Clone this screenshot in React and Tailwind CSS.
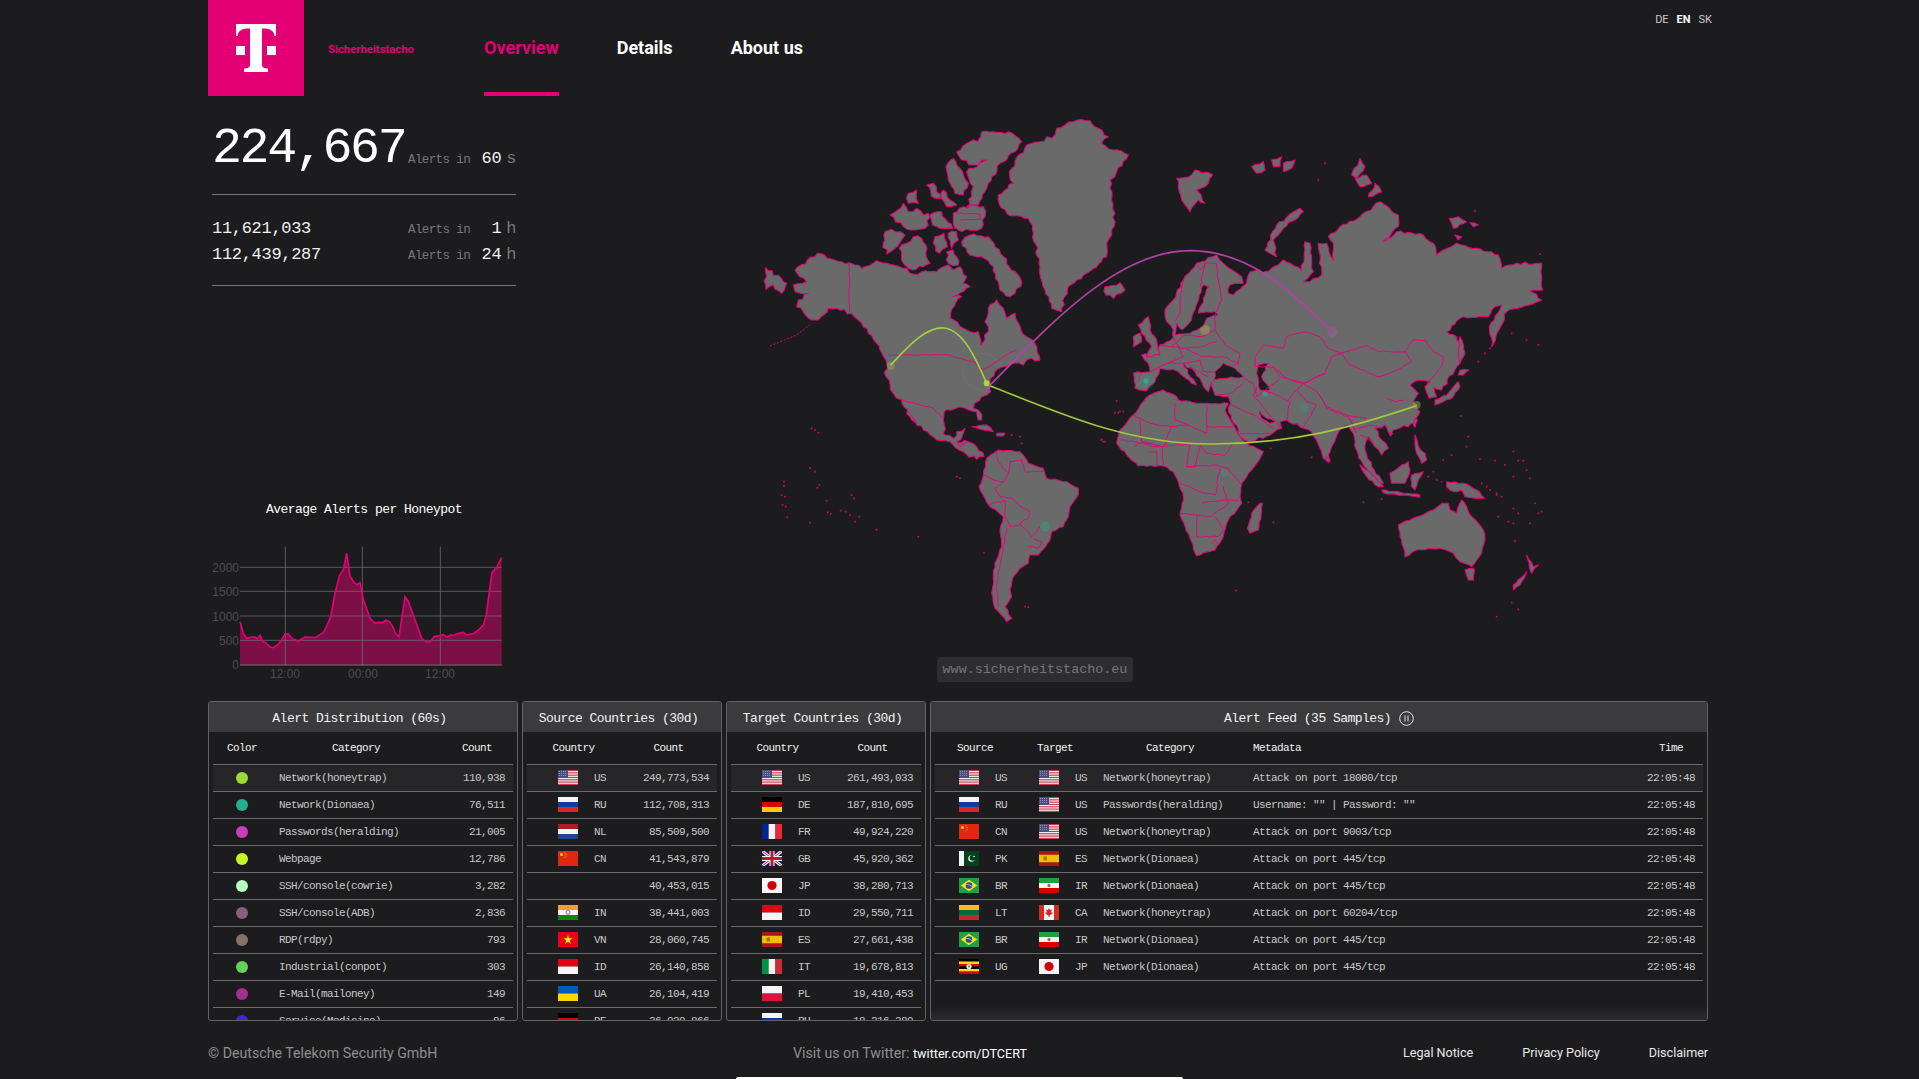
import React from "react";

const MONO = "font-['Liberation_Mono',monospace]";
const SANS = "font-['Roboto',sans-serif]";

/* ---------- map data, traced in 3x reference coordinates per crop ---------- */
const NA = [
  "165,510 232,460 262,475 328,488 345,495 365,505 410,482 440,490 500,505 510,520 545,515 590,515 625,495 640,510 660,500 680,530 670,550 690,560 640,590 665,590 632,640 632,655 680,690 715,695 722,735 735,720 745,680 735,665 745,625 770,600 790,625 800,655 825,640 835,670 860,710 885,730 900,780 860,780 850,795 820,790 790,800 765,815 750,850 752,875 725,890 700,925 715,930 725,960 715,960 710,935 675,925 620,928 610,960 610,1000 615,1005 640,1015 650,995 675,985 668,1005 650,1025 685,1025 710,1040 732,1070 710,1078 670,1055 630,1025 590,1020 550,990 515,960 485,900 460,880 438,830 440,790 420,750 385,700 355,660 335,640 290,625 265,625 235,660 215,660 170,620 175,600 205,580 165,575 160,555 200,545",
  "650,155 690,125 712,125 725,95 760,95 805,95 845,125 825,155 780,190 745,250 735,275 715,315 680,320 695,290 700,260 680,215 700,205 740,180 700,195 665,180",
  "618,200 640,175 660,205 685,250 670,285 645,280 625,240",
  "450,345 490,310 505,335 530,325 550,345 565,340 565,375 525,390 490,380",
  "560,255 580,250 605,295 585,295",
  "505,280 530,270 535,310 505,310",
  "610,270 630,300 650,315 620,320 605,295",
  "640,340 670,320 730,320 735,350 725,385 655,390 640,370",
  "570,345 605,335 638,385 600,385 578,375",
  "435,395 455,388 495,405 465,445 440,462 430,430",
  "478,445 520,410 545,415 570,490 550,500 505,505 490,490",
  "585,410 612,400 622,440 598,460 580,430",
  "625,400 650,395 655,420 635,445",
  "620,455 640,450 655,495 625,490",
  "665,425 690,405 745,410 790,470 845,545 825,580 810,590 780,570 760,500 725,470 690,465",
  "76,503 140,550 125,580 100,555 78,568",
  "1000,65 1050,62 1075,85 1105,110 1085,130 1120,150 1165,165 1130,215 1110,240 1115,300 1125,340 1115,390 1100,430 1100,470 1040,520 985,560 965,635 935,625 915,570 900,500 880,400 865,355 800,340 775,300 775,285 820,250 808,215 860,135 900,125 945,105 950,85",
  "1095,560 1140,548 1155,570 1120,595 1098,585",
];
const NA_LINES = [
  "328,488 328,635",
  "445,765 630,765 660,775 700,785 730,810 790,770 830,750",
  "485,900 540,915 580,925 610,955",
  "505,935 530,970 520,965",
  "650,1025 660,1040 685,1025",
  "650,340 720,342 722,358 660,360",
];
const EUR = [
  "75,630 100,600 130,540 170,490 230,465 250,490 305,530 310,550 270,555 265,580 280,585 320,550 330,515 360,510 365,520 415,495 430,480 485,510 495,425 510,430 515,470 520,515 490,545 510,545 545,525 535,430 560,430 580,480 580,430 565,410 600,380 660,350 700,320 720,305 775,345 775,380 730,425 770,395 850,405 880,430 890,465 950,430 1010,445 1075,465 1085,505 1130,490 1205,490 1208,570 1170,572 1205,600 1100,635 1055,740 1048,680 1085,615 1065,620 1045,650 970,650 920,695 950,710 965,740 960,790 950,800 905,870 882,862 890,890 868,895 855,860 870,845 835,840 810,855 825,870 835,880 820,905 830,915 840,935 825,970 760,990 750,1005 735,975 705,985 725,1020 745,1045 725,1065 705,1040 685,1010 675,1050 695,1100 730,1150 710,1155 670,1095 650,1050 640,1000 625,975 605,985 565,1065 570,1085 550,1075 515,995 490,985 440,960 420,965 425,985 390,1005 325,1025 300,1010 265,925 272,910 265,890 225,885 215,845 205,875 180,835 165,815 130,790 150,830 170,855 155,850 125,825 100,808 60,805 48,835 20,872 -15,865 -20,820 30,815 25,790 5,765 40,760 60,735 100,712 100,690 80,665",
  "-5,675 25,650 30,690 50,720 60,765 20,770 35,740 5,700",
  "-20,710 0,700 5,725 -20,740",
  "110,235 155,225 165,210 218,225 205,250 170,270 195,310 175,300 150,335 125,300 115,260",
  "335,200 370,185 375,210 350,220",
  "395,180 425,170 420,200 400,200",
  "430,190 465,180 455,205 430,215",
  "375,450 410,375 480,325 490,335 430,385 400,420 410,470",
  "635,225 660,175 675,200 650,235",
  "645,235 680,225 695,250 660,260",
  "685,290 705,250 725,275",
  "928,355 955,350 980,365 940,385",
  "990,368 1015,375 1000,380",
  "945,405 965,410 955,420",
  "960,710 975,760 960,790 955,760",
];
const SEAS = [
  "155,660 190,555 205,560 175,640 225,635 235,645 200,655 190,680 150,700 105,705 110,670 125,690",
  "225,815 250,790 275,800 310,830 250,835 222,840",
  "355,795 385,790 365,830 390,870 360,870 350,820",
  "358,932 380,955 405,965 390,970 365,955",
];
const EUR_LINES = [
  "230,490 235,540 245,600 225,650 225,690 255,735 300,760 295,790 275,800",
  "345,770 370,735 430,745 440,710 490,695 540,710 565,745 605,760 680,735 715,755 795,755 820,720 855,720 880,755 910,770 905,800 880,830 860,850",
  "605,760 630,795 715,830 760,815 815,785 795,755",
  "345,770 345,800 400,800 440,835 490,850 555,820 575,770 605,760",
  "555,820 490,850 535,880 560,920 620,945 680,955",
  "310,835 340,850 350,890 420,835",
  "350,860 340,885 385,940 425,985",
  "440,960 450,905 400,880 370,870",
  "400,800 420,830 490,850 460,880 440,905",
  "470,870 500,905 530,915 490,985",
  "535,880 560,925 625,950 640,980",
  "625,950 650,1000",
  "640,990 690,975 730,985",
  "660,1005 690,1020 705,1040",
  "270,915 350,950 400,985",
  "300,1000 390,1000",
  "225,885 272,880 310,850",
  "60,735 95,740 135,705",
  "100,712 130,770 80,790 30,815",
  "135,705 185,710 225,690",
  "135,745 185,740 230,725",
  "95,740 135,745 185,770 250,770 295,790",
  "85,790 130,790 180,780",
  "150,800 205,830",
  "180,780 190,815 225,815",
  "130,540 120,600 120,640 105,665",
  "170,490 180,510 195,490 230,490",
  "195,490 180,560",
  "740,895 765,905 790,900",
  "-5,845 5,820",
];
const AF = [
  "150,165 190,150 230,170 235,180 290,190 320,190 385,190 375,210 420,290 440,310 490,335 470,370 425,430 420,470 425,490 385,540 370,590 345,630 290,648 270,595 240,525 250,470 235,425 220,395 190,378 115,378 80,345 50,310 60,270 100,225 130,185",
  "480,490 488,490 475,570 450,580 442,565 455,520",
  "680,350 690,360 685,368 678,360",
  "780,375 810,395 850,440 835,440 800,410",
  "845,450 960,465 958,472 850,458",
  "870,400 905,375 925,365 930,390 915,430 875,430",
  "935,405 970,395 955,420 945,450 935,440",
  "1040,425 1090,430 1130,450 1155,475 1095,470 1085,450 1060,455 1040,440",
  "945,285 955,320 975,340 980,360 965,370 950,340 945,310",
  "1005,180 1040,165 1075,125 1080,140 1060,170 1030,185 1005,195",
  "1080,90 1105,90 1090,105 1075,105",
  "945,235 952,240 945,262 940,255",
  "868,278 878,280 872,288",
  "1000,510 1025,490 1045,490 1050,510 1070,520 1085,480 1100,500 1115,530 1150,570 1155,600 1145,640 1115,680 1080,665 1060,640 1020,625 950,630 915,650 905,600 895,555 940,535",
  "1095,690 1122,685 1120,720 1105,720",
  "1280,645 1300,680 1315,675 1295,700",
  "1280,695 1260,735 1240,750 1240,735",
];
const AF_LINES = [
  "120,240 125,305 190,320 215,260 265,255 320,280 320,190",
  "225,190 225,240 265,255",
  "320,260 400,262",
  "300,315 320,340 375,345 400,310",
  "185,320 190,375",
  "105,320 125,305 185,320 270,310 260,380 285,380 300,320",
  "60,300 130,310 160,320 185,320",
  "145,335 170,335 170,375",
  "100,225 150,250 215,260",
  "260,380 350,375 385,385 420,430",
  "240,430 300,455 345,465 355,430",
  "350,430 360,385",
  "240,520 290,525 330,530 385,490 370,440",
  "290,525 290,590 355,590 370,570 345,530",
  "305,490 385,480 415,480",
  "335,610 345,600 352,610 342,618",
];
const SA = [
  "620,175 655,150 720,155 745,190 790,205 800,235 860,245 895,265 895,285 870,320 865,350 850,380 815,395 810,420 775,465 750,465 745,490 720,505 700,530 690,570 695,590 675,620 695,655 680,665 645,625 635,580 645,490 665,440 660,390 670,350 625,315 597,260 610,225",
  "575,80 620,75 640,95 610,90",
  "650,100 675,100 670,108 650,108",
];
const SA_LINES = [
  "650,155 655,185 685,220 670,245 640,240 610,225",
  "685,220 690,185 725,180 735,215 790,215",
  "645,265 670,245",
  "645,265 660,290 695,295 730,325 750,335 745,355 720,370 755,410 770,395 780,380",
  "625,315 675,300 675,350 690,380 720,375",
  "680,385 665,470 650,560 655,620",
  "745,440 775,445 785,425 760,415",
];
const DOTS8 = "95,85 105,90 115,98 90,204 105,215 12,245 12,258 118,255 112,263 5,285 15,290 215,285 222,295 140,302 8,315 17,320 143,337 152,342 182,332 197,335 210,345 238,350 22,352 90,368 225,365 290,389 415,410 612,458 530,230 540,235 735,620 745,622 965,118 975,125 1015,38 1030,35 695,105 720,110 725,130";
const DOTS9 = "1082,228 1105,290 1100,320 1030,360 1055,345 1140,358 1185,362 1215,375 1240,335 1255,362 1270,362 1280,390 1290,415 1240,410 1190,460 1205,470 1240,505 1255,520 1225,545 1240,550 1315,520 1325,515 1305,490 1195,530 1290,550 1245,603 1235,788 1255,808 1190,830 790,487 845,477 520,547 408,752 50,183 60,215 45,218 5,300 10,305 445,487 512,325 635,352 1000,395 1010,420 985,410 1025,425 1145,430 1170,450 1190,465 1160,440";
const DOTS7 = "1115,700 1160,720 1195,735 1050,745 1035,760 1015,785 985,810 555,190 535,240 1200,462 1005,333 85,460";

const pts = (s) => s.split(" ").map((p) => p.split(",").map(Number));

/* subdivide a traced outline and shake it a little, so that coasts read as coasts */
function rough(s, amp, closed, seed0) {
  const p = pts(s);
  let seed = seed0;
  const rnd = () => {
    seed = (seed * 16807) % 2147483647;
    return (seed % 1000) / 1000 - 0.5;
  };
  const out = [];
  const n = closed ? p.length : p.length - 1;
  for (let i = 0; i < n; i++) {
    const [x0, y0] = p[i];
    const [x1, y1] = p[(i + 1) % p.length];
    out.push(`${x0},${y0}`);
    const len = Math.hypot(x1 - x0, y1 - y0);
    const k = Math.floor(len / 11);
    for (let j = 1; j < k; j++) {
      const t = j / k;
      const a = rnd() * amp * 2;
      out.push(`${(x0 + (x1 - x0) * t - ((y1 - y0) / len) * a).toFixed(1)},${(y0 + (y1 - y0) * t + ((x1 - x0) / len) * a).toFixed(1)}`);
    }
  }
  if (!closed) out.push(`${p[n][0]},${p[n][1]}`);
  return out.join(" ");
}

function Land({ at, shapes, lines, seas, dots, amp = 4 }) {
  return (
    <g transform={`translate(${at[0]} ${at[1]})`}>
      {shapes &&
        shapes.map((s, i) => (
          <polygon key={i} points={rough(s, amp, true, 97 + i * 13)} fill="#6a6a6a" stroke="#e8007a" strokeWidth="3.2" strokeLinejoin="round" />
        ))}
      {seas &&
        seas.map((s, i) => (
          <polygon key={i} points={rough(s, amp * 0.7, true, 31 + i * 7)} fill="#1c1c1e" stroke="#e8007a" strokeWidth="3" strokeLinejoin="round" />
        ))}
      {lines &&
        lines.map((s, i) => (
          <polyline key={i} points={rough(s, 2, false, 53 + i * 11)} fill="none" stroke="#e8007a" strokeWidth="2.8" strokeLinejoin="round" />
        ))}
      {dots &&
        pts(dots).map(([x, y], i) => <rect key={i} x={x - 2.5} y={y - 2.5} width="5" height="5" fill="#d6006c" />)}
    </g>
  );
}

function WorldMap() {
  return (
    <svg width="1189" height="605" viewBox="522 96 1189 605" className="block">
      <g transform="scale(0.33333)">
        <Land at={[2220, 300]} shapes={NA} lines={NA_LINES} amp={6} />
        <polyline points="2310,1038 2390,1005 2435,970" fill="none" stroke="#d6006c" strokeWidth="3" strokeDasharray="6 5" />
        <Land at={[2340, 1200]} shapes={SA} lines={SA_LINES} dots={DOTS8} amp={2.5} />
        <Land at={[3420, 300]} shapes={EUR} seas={SEAS} lines={EUR_LINES} dots={DOTS7} amp={4} />
        <Land at={[3300, 1020]} shapes={AF} lines={AF_LINES} dots={DOTS9} amp={2.5} />

        {/* pulses */}
        <circle cx="2945" cy="1115" r="55" fill="none" stroke="#8c9a70" strokeOpacity=".25" strokeWidth="2" />
        <circle cx="2672" cy="1098" r="12" fill="#8f9f62" fillOpacity=".6" />
        <circle cx="3615" cy="990" r="15" fill="#a8a050" fillOpacity=".5" />
        <circle cx="3997" cy="997" r="15" fill="#a05fa0" fillOpacity=".45" />
        <circle cx="4250" cy="1215" r="12" fill="#8f9f42" fillOpacity=".55" />
        <circle cx="3438" cy="1143" r="26" fill="#22b08e" fillOpacity=".16" stroke="#22b08e" strokeOpacity=".3" />
        <circle cx="3438" cy="1143" r="8" fill="#22b08e" fillOpacity=".85" />
        <circle cx="3795" cy="1182" r="40" fill="none" stroke="#22b08e" strokeOpacity=".22" />
        <circle cx="3795" cy="1182" r="8" fill="#22b08e" fillOpacity=".6" />
        <circle cx="3912" cy="1223" r="14" fill="#22b08e" fillOpacity=".25" />
        <circle cx="3672" cy="1420" r="11" fill="#22b08e" fillOpacity=".25" />
        <circle cx="3135" cy="1580" r="15" fill="#22b08e" fillOpacity=".4" />

        {/* arcs */}
        <path d="M2965,1160 C3150,975 3350,752 3570,752 C3740,752 3860,860 3997,995" fill="none" stroke="#b540a8" strokeWidth="5" />
        <path d="M2672,1095 C2720,1045 2775,980 2832,984 C2890,990 2930,1080 2960,1150" fill="none" stroke="#a2d03a" strokeWidth="5" />
        <path d="M2970,1157 C3200,1250 3400,1335 3640,1332 C3880,1330 4050,1285 4250,1217" fill="none" stroke="#a2c83a" strokeWidth="5" />
        <circle cx="2965" cy="1162" r="6" fill="#c040b0" />
        <circle cx="2960" cy="1150" r="9" fill="#a6e02e" />
      </g>
    </svg>
  );
}

/* ---------- flags ---------- */
const bands = (cols, vertical) => (
  <>
    {cols.map((c, i) =>
      vertical ? (
        <rect key={i} x={(20 / cols.length) * i} y="0" width={20 / cols.length + 0.1} height="15" fill={c} />
      ) : (
        <rect key={i} x="0" y={(15 / cols.length) * i} width="20" height={15 / cols.length + 0.1} fill={c} />
      )
    )}
  </>
);

function FlagArt({ c }) {
  switch (c) {
    case "US":
      return (
        <>
          <rect width="20" height="15" fill="#f4f4f4" />
          {[0, 2.3, 4.6, 6.9, 9.2, 11.5, 13.8].map((y) => (
            <rect key={y} y={y} width="20" height="1.15" fill="#c8384e" />
          ))}
          <rect width="10" height="8" fill="#4a4f82" />
          <path d="M1 1.5h8M1 3.5h8M1 5.5h8" stroke="#a9abc8" strokeWidth=".7" strokeDasharray="1 1" />
        </>
      );
    case "RU":
      return bands(["#f5f5f5", "#0a3aa8", "#d52b1e"]);
    case "NL":
      return bands(["#ae1c28", "#f5f5f5", "#21468b"]);
    case "DE":
      return bands(["#000000", "#dd0000", "#ffce00"]);
    case "FR":
      return bands(["#002395", "#f5f5f5", "#ed2939"], true);
    case "IT":
      return bands(["#009246", "#f5f5f5", "#ce2b37"], true);
    case "ID":
      return bands(["#e70011", "#f5f5f5"]);
    case "PL":
      return bands(["#f5f5f5", "#dc143c"]);
    case "UA":
      return bands(["#005bbb", "#ffd500"]);
    case "LT":
      return bands(["#fdb913", "#006a44", "#c1272d"]);
    case "CN":
      return (
        <>
          <rect width="20" height="15" fill="#de2910" />
          <circle cx="3.5" cy="3.5" r="1.5" fill="#ffde00" />
          <circle cx="7" cy="1.7" r=".5" fill="#ffde00" />
          <circle cx="8.2" cy="3.3" r=".5" fill="#ffde00" />
          <circle cx="8" cy="5" r=".5" fill="#ffde00" />
          <circle cx="6.8" cy="6.3" r=".5" fill="#ffde00" />
        </>
      );
    case "IN":
      return (
        <>
          {bands(["#ff9933", "#f5f5f5", "#138808"])}
          <circle cx="10" cy="7.5" r="2" fill="none" stroke="#3a3a9a" strokeWidth=".6" />
        </>
      );
    case "VN":
      return (
        <>
          <rect width="20" height="15" fill="#ec0015" />
          <polygon points="10,3 11.1,6.3 14.5,6.3 11.7,8.4 12.8,11.8 10,9.7 7.2,11.8 8.3,8.4 5.5,6.3 8.9,6.3" fill="#ffff00" />
        </>
      );
    case "GB":
      return (
        <>
          <rect width="20" height="15" fill="#012169" />
          <path d="M0 0L20 15M20 0L0 15" stroke="#fff" strokeWidth="3" />
          <path d="M0 0L20 15M20 0L0 15" stroke="#c8102e" strokeWidth="1" />
          <path d="M10 0V15M0 7.5H20" stroke="#fff" strokeWidth="5" />
          <path d="M10 0V15M0 7.5H20" stroke="#c8102e" strokeWidth="3" />
        </>
      );
    case "JP":
      return (
        <>
          <rect width="20" height="15" fill="#f7f7f7" />
          <circle cx="10" cy="7.5" r="4.6" fill="#d30000" />
        </>
      );
    case "ES":
      return (
        <>
          <rect width="20" height="15" fill="#aa151b" />
          <rect y="3.75" width="20" height="7.5" fill="#f1bf00" />
          <rect x="4.5" y="5.5" width="3.4" height="3.8" fill="#ad6b2c" />
        </>
      );
    case "PK":
      return (
        <>
          <rect width="20" height="15" fill="#01411c" />
          <rect width="5" height="15" fill="#f5f5f5" />
          <circle cx="12.5" cy="7.5" r="3.2" fill="#f5f5f5" />
          <circle cx="13.5" cy="6.8" r="2.9" fill="#01411c" />
          <circle cx="15" cy="5.5" r=".8" fill="#f5f5f5" />
        </>
      );
    case "BR":
      return (
        <>
          <rect width="20" height="15" fill="#229e45" />
          <polygon points="10,1.8 18.2,7.5 10,13.2 1.8,7.5" fill="#f8e509" />
          <circle cx="10" cy="7.5" r="3.3" fill="#2b49a3" />
          <path d="M6.9 6.6C9 6.3 11.5 7 13 8.6" stroke="#fff" strokeWidth=".6" fill="none" />
        </>
      );
    case "IR":
      return (
        <>
          {bands(["#239f40", "#f5f5f5", "#da0000"])}
          <circle cx="10" cy="7.5" r="1.5" fill="#da4040" />
        </>
      );
    case "CA":
      return (
        <>
          <rect width="20" height="15" fill="#f5f5f5" />
          <rect width="5" height="15" fill="#d52b1e" />
          <rect x="15" width="5" height="15" fill="#d52b1e" />
          <polygon points="10,3 11,5 12.8,4.5 12.2,7.5 13.8,7.5 13.2,9 10.5,10.5 10.5,12 9.5,12 9.5,10.5 6.8,9 6.2,7.5 7.8,7.5 7.2,4.5 9,5" fill="#d52b1e" />
        </>
      );
    case "UG":
      return (
        <>
          {bands(["#000", "#fcdc04", "#d90000", "#000", "#fcdc04", "#d90000"])}
          <circle cx="10" cy="7.5" r="2.6" fill="#f5f5f5" />
          <circle cx="10" cy="7.5" r="1" fill="#666" />
        </>
      );
    default:
      return null;
  }
}

function Flag({ c }) {
  return (
    <svg viewBox="0 0 20 15" className="block w-5 h-[15px] shrink-0 -mt-[3px]">
      <FlagArt c={c} />
    </svg>
  );
}

function CountryCell({ c, pad = 31 }) {
  if (!c) return <td className={tdBase} />;
  return (
    <td className={tdBase}>
      <div className="flex items-center" style={{ paddingLeft: pad }}>
        <Flag c={c} />
        <span className="ml-[16px]">{c}</span>
      </div>
    </td>
  );
}

/* ---------- tables ---------- */
const tdBase = "h-[27px] p-0 pt-[1px] border-b border-[#6a6a6a] text-[11px] tracking-[-0.6px] text-[#c8c8c8] whitespace-nowrap";
const thBase = "h-[33px] p-0 pt-[1px] border-b border-[#6a6a6a] text-[11px] tracking-[-0.6px] text-[#f2f2f2] font-normal text-center";

function Panel({ title, width, icon, fade, children }) {
  return (
    <section className={`relative h-[320px] shrink-0 overflow-hidden rounded-[3px] border border-[#636365] bg-[#1c1c1e] ${width}`}>
      <div className={`h-[30px] pt-[3px] bg-[#3b3b3d] flex items-center justify-center gap-[8px] text-[13px] tracking-[-0.54px] text-[#f2f2f2] ${icon ? "" : "pr-[7px]"}`}>
        <span>{title}</span>
        {icon}
      </div>
      <div className="px-1">{children}</div>
      {fade && <div className="absolute inset-x-0 bottom-0 h-[14px] bg-gradient-to-b from-transparent to-[#2c2c2e]" />}
    </section>
  );
}

const DIST = [
  ["#9cdb35", "Network(honeytrap)", "110,938"],
  ["#22b08e", "Network(Dionaea)", "76,511"],
  ["#cc3bb8", "Passwords(heralding)", "21,005"],
  ["#c6f52a", "Webpage", "12,786"],
  ["#b6fbc0", "SSH/console(cowrie)", "3,282"],
  ["#86607c", "SSH/console(ADB)", "2,836"],
  ["#857465", "RDP(rdpy)", "793"],
  ["#63d158", "Industrial(conpot)", "303"],
  ["#a52e93", "E-Mail(mailoney)", "149"],
  ["#4a25e0", "Service(Medicine)", "86"],
];
const SRC = [
  ["US", "249,773,534"],
  ["RU", "112,708,313"],
  ["NL", "85,509,500"],
  ["CN", "41,543,879"],
  ["", "40,453,015"],
  ["IN", "38,441,003"],
  ["VN", "28,060,745"],
  ["ID", "26,140,858"],
  ["UA", "26,104,419"],
  ["DE", "26,020,866"],
];
const TGT = [
  ["US", "261,493,033"],
  ["DE", "187,810,695"],
  ["FR", "49,924,220"],
  ["GB", "45,920,362"],
  ["JP", "38,280,713"],
  ["ID", "29,550,711"],
  ["ES", "27,661,438"],
  ["IT", "19,678,813"],
  ["PL", "19,410,453"],
  ["RU", "18,216,380"],
];
const FEED = [
  ["US", "US", "Network(honeytrap)", "Attack on port 18080/tcp"],
  ["RU", "US", "Passwords(heralding)", 'Username: "" | Password: ""'],
  ["CN", "US", "Network(honeytrap)", "Attack on port 9003/tcp"],
  ["PK", "ES", "Network(Dionaea)", "Attack on port 445/tcp"],
  ["BR", "IR", "Network(Dionaea)", "Attack on port 445/tcp"],
  ["LT", "CA", "Network(honeytrap)", "Attack on port 60204/tcp"],
  ["BR", "IR", "Network(Dionaea)", "Attack on port 445/tcp"],
  ["UG", "JP", "Network(Dionaea)", "Attack on port 445/tcp"],
];

function CountryTable({ title, rows }) {
  return (
    <Panel title={title} width="w-[200px]">
      <table className="w-full table-fixed border-separate border-spacing-0">
        <colgroup>
          <col className="w-[93px]" />
          <col />
        </colgroup>
        <thead>
          <tr>
            <th className={thBase}>Country</th>
            <th className={thBase}>Count</th>
          </tr>
        </thead>
        <tbody>
          {rows.map(([c, n], i) => (
            <tr key={n} className={i === 0 ? "bg-[#262628]" : ""}>
              <CountryCell c={c} />
              <td className={`${tdBase} text-right pr-2`}>{n}</td>
            </tr>
          ))}
        </tbody>
      </table>
    </Panel>
  );
}

function Stat({ value, amount, unit, big }) {
  return (
    <div className={`flex items-baseline ${big ? "" : "h-[26px] leading-[26px]"}`}>
      <span
        className={
          big
            ? "relative -top-[1px] w-[196px] text-[50px] leading-[50px] tracking-[-2.4px] text-white"
            : "w-[196px] text-[17px] tracking-[-0.3px] text-[#f0f0f0]"
        }
      >
        {value}
      </span>
      <span className="w-[64px] shrink-0 whitespace-nowrap text-[12.5px] tracking-[-0.6px] text-[#777779]">Alerts in</span>
      <span className="flex-1 whitespace-nowrap text-right text-[17px] tracking-[-0.4px] text-[#f0f0f0]">
        {amount}
        <span className="ml-[5px] text-[#777779]">{unit}</span>
      </span>
    </div>
  );
}

const CHART =
  "120,395 130,430 140,445 155,441 165,441 172,446 180,436 188,455 197,458 210,471 220,473 232,465 245,450 256,431 266,433 277,446 295,453 315,441 345,443 370,428 382,405 392,380 405,310 418,258 430,240 440,190 450,258 462,278 472,284 480,278 490,330 498,350 510,385 525,400 535,397 548,398 557,390 568,394 578,410 588,432 597,441 615,320 625,335 640,375 665,445 678,456 690,456 702,440 730,434 740,441 752,435 762,436 770,431 790,427 800,435 820,431 835,420 850,405 858,380 876,247 890,232 905,203";

function Chart() {
  const lab = { fontFamily: "'Liberation Sans',sans-serif", fontSize: 12, fill: "#4c4c4e" };
  return (
    <svg width="308" height="145" viewBox="208 540 308 145" className="block">
      <g transform="translate(200 490) scale(0.33333)">
        <polygon points={`120,526 ${CHART} 905,526`} fill="#7d0f47" />
        {[232, 304, 378, 451].map((y) => (
          <line key={y} x1="120" x2="905" y1={y} y2={y} stroke="#6f6f72" strokeOpacity=".75" strokeWidth="3" />
        ))}
        {[256, 487, 721].map((x) => (
          <line key={x} x1={x} x2={x} y1="170" y2="526" stroke="#6f6f72" strokeOpacity=".75" strokeWidth="3" />
        ))}
        <line x1="120" x2="905" y1="525" y2="525" stroke="#6f6f72" strokeWidth="3" />
        <polyline points={CHART} fill="none" stroke="#e20074" strokeWidth="5" />
      </g>
      {[
        ["2000", 572],
        ["1500", 596],
        ["1000", 621],
        ["500", 645],
        ["0", 669],
      ].map(([t, y]) => (
        <text key={t} x="239" y={y} textAnchor="end" style={lab}>
          {t}
        </text>
      ))}
      {[
        ["12:00", 285],
        ["00:00", 363],
        ["12:00", 440],
      ].map(([t, x], i) => (
        <text key={i} x={x} y="678" textAnchor="middle" style={lab}>
          {t}
        </text>
      ))}
    </svg>
  );
}

export default function App() {
  return (
    <div className="relative h-[1079px] overflow-hidden bg-[#1c1c1e]">
      <div className={`w-[1504px] ml-[208px] ${MONO}`}>
        {/* header */}
        <header className={`flex h-[96px] items-start ${SANS}`}>
          <div className="w-[96px] h-[96px] bg-[#e20074] shrink-0">
            <svg viewBox="208 0 96 96" className="block w-[96px] h-[96px]">
              <path
                d="M236 24H276V36H274.5C274 31 271 28.5 262 28.5V64C262 67.5 263.5 68.5 268 68.5V72H244V68.5C248.5 68.5 250 67.5 250 64V28.5C241 28.5 238 31 237.5 36H236Z"
                fill="#fff"
              />
              <rect x="236" y="46" width="9" height="9" fill="#fff" />
              <rect x="267" y="46" width="9" height="9" fill="#fff" />
            </svg>
          </div>
          <div className="ml-6 w-[156px] h-[96px] flex items-center pt-[4px] text-[11.3px] font-bold text-[#e20074] whitespace-nowrap">
            Sicherheitstacho
          </div>
          <nav className="flex gap-[58px] text-[18px] font-bold text-white">
            <a className="h-[96px] pt-[2px] flex items-center border-b-4 border-[#e20074] text-[#e20074]">Overview</a>
            <a className="h-[96px] pt-[2px] flex items-center border-b-4 border-transparent">Details</a>
            <a className="h-[96px] pt-[2px] flex items-center border-b-4 border-transparent">About us</a>
          </nav>
          <div className="ml-auto pt-[13px] flex gap-[8px] text-[11px] leading-[14px] text-[#c9c9c9]">
            <span>DE</span>
            <span className="font-bold text-white">EN</span>
            <span>SK</span>
          </div>
        </header>

        {/* middle */}
        <div className="flex h-[605px]">
          <aside className="w-[314px] shrink-0">
            <div className="ml-1 w-[304px] h-[99px] pt-[29px] border-b border-[#777779]">
              <Stat big value="224,667" amount="60" unit="s" />
            </div>
            <div className="ml-1 w-[304px] h-[91px] pt-[21px] border-b border-[#777779]">
              <Stat value="11,621,033" amount="1" unit="h" />
              <Stat value="112,439,287" amount="24" unit="h" />
            </div>
            <div className="mt-[214px] h-[20px] w-[312px] leading-[20px] text-center text-[13px] tracking-[-0.54px] text-white">
              Average Alerts per Honeypot
            </div>
            <div className="mt-[20px]">
              <Chart />
            </div>
          </aside>
          <div className="relative flex-1">
            <WorldMap />
            <div className="absolute left-[415px] top-[561px] w-[196px] h-[25px] rounded-[3px] bg-[#2e2e30] text-center text-[13.4px] leading-[25px] text-[#767678]">
              www.sicherheitstacho.eu
            </div>
          </div>
        </div>

        {/* panels */}
        <div className="flex gap-1">
          <Panel title="Alert Distribution (60s)" width="w-[310px]">
            <table className="w-full table-fixed border-separate border-spacing-0">
              <colgroup>
                <col className="w-[58px]" />
                <col className="w-[170px]" />
                <col />
              </colgroup>
              <thead>
                <tr>
                  <th className={thBase}>Color</th>
                  <th className={thBase}>Category</th>
                  <th className={thBase}>Count</th>
                </tr>
              </thead>
              <tbody>
                {DIST.map(([c, n, v], i) => (
                  <tr key={n} className={i === 0 ? "bg-[#262628]" : ""}>
                    <td className={tdBase}>
                      <span className="mx-auto -mt-[2px] block w-3 h-3 rounded-full" style={{ background: c }} />
                    </td>
                    <td className={`${tdBase} pl-2`}>{n}</td>
                    <td className={`${tdBase} pr-2 text-right`}>{v}</td>
                  </tr>
                ))}
              </tbody>
            </table>
          </Panel>
          <CountryTable title="Source Countries (30d)" rows={SRC} />
          <CountryTable title="Target Countries (30d)" rows={TGT} />
          <Panel
            title="Alert Feed (35 Samples)"
            width="w-[778px]"
            fade
            icon={
              <svg viewBox="0 0 15 15" className="block w-[15px] h-[15px]">
                <circle cx="7.5" cy="7.5" r="6.8" fill="none" stroke="#e6e6e6" strokeWidth="1" />
                <path d="M6 4.5v6M9 4.5v6" stroke="#e6e6e6" strokeWidth="1" />
              </svg>
            }
          >
            <table className="w-full table-fixed border-separate border-spacing-0">
              <colgroup>
                <col className="w-[80px]" />
                <col className="w-[80px]" />
                <col className="w-[150px]" />
                <col />
                <col className="w-[64px]" />
              </colgroup>
              <thead>
                <tr>
                  <th className={thBase}>Source</th>
                  <th className={thBase}>Target</th>
                  <th className={thBase}>Category</th>
                  <th className={`${thBase} text-left pl-2`}>Metadata</th>
                  <th className={thBase}>Time</th>
                </tr>
              </thead>
              <tbody>
                {FEED.map(([s, t, c, m], i) => (
                  <tr key={i} className={i === 0 ? "bg-[#262628]" : ""}>
                    <CountryCell c={s} pad={24} />
                    <CountryCell c={t} pad={24} />
                    <td className={`${tdBase} pl-2`}>{c}</td>
                    <td className={`${tdBase} pl-2`}>{m}</td>
                    <td className={`${tdBase} text-center`}>22:05:48</td>
                  </tr>
                ))}
              </tbody>
            </table>
          </Panel>
        </div>

        {/* footer */}
        <footer className={`flex items-center h-[58px] pt-[7px] text-[14.2px] text-[#8e8e90] ${SANS}`}>
          <div className="w-[585px] shrink-0 whitespace-nowrap">© Deutsche Telekom Security GmbH</div>
          <div className="w-[610px] shrink-0 whitespace-nowrap">
            Visit us on Twitter: <a className="text-[12.6px] text-white">twitter.com/DTCERT</a>
          </div>
          <div className="flex shrink-0 gap-[49px] text-[12.6px] text-[#e8e8e8] whitespace-nowrap">
            <a>Legal Notice</a>
            <a>Privacy Policy</a>
            <a>Disclaimer</a>
          </div>
        </footer>
      </div>
      <div className="absolute bottom-0 left-[736px] w-[447px] h-[2px] rounded-t-[3px] bg-white" />
    </div>
  );
}
